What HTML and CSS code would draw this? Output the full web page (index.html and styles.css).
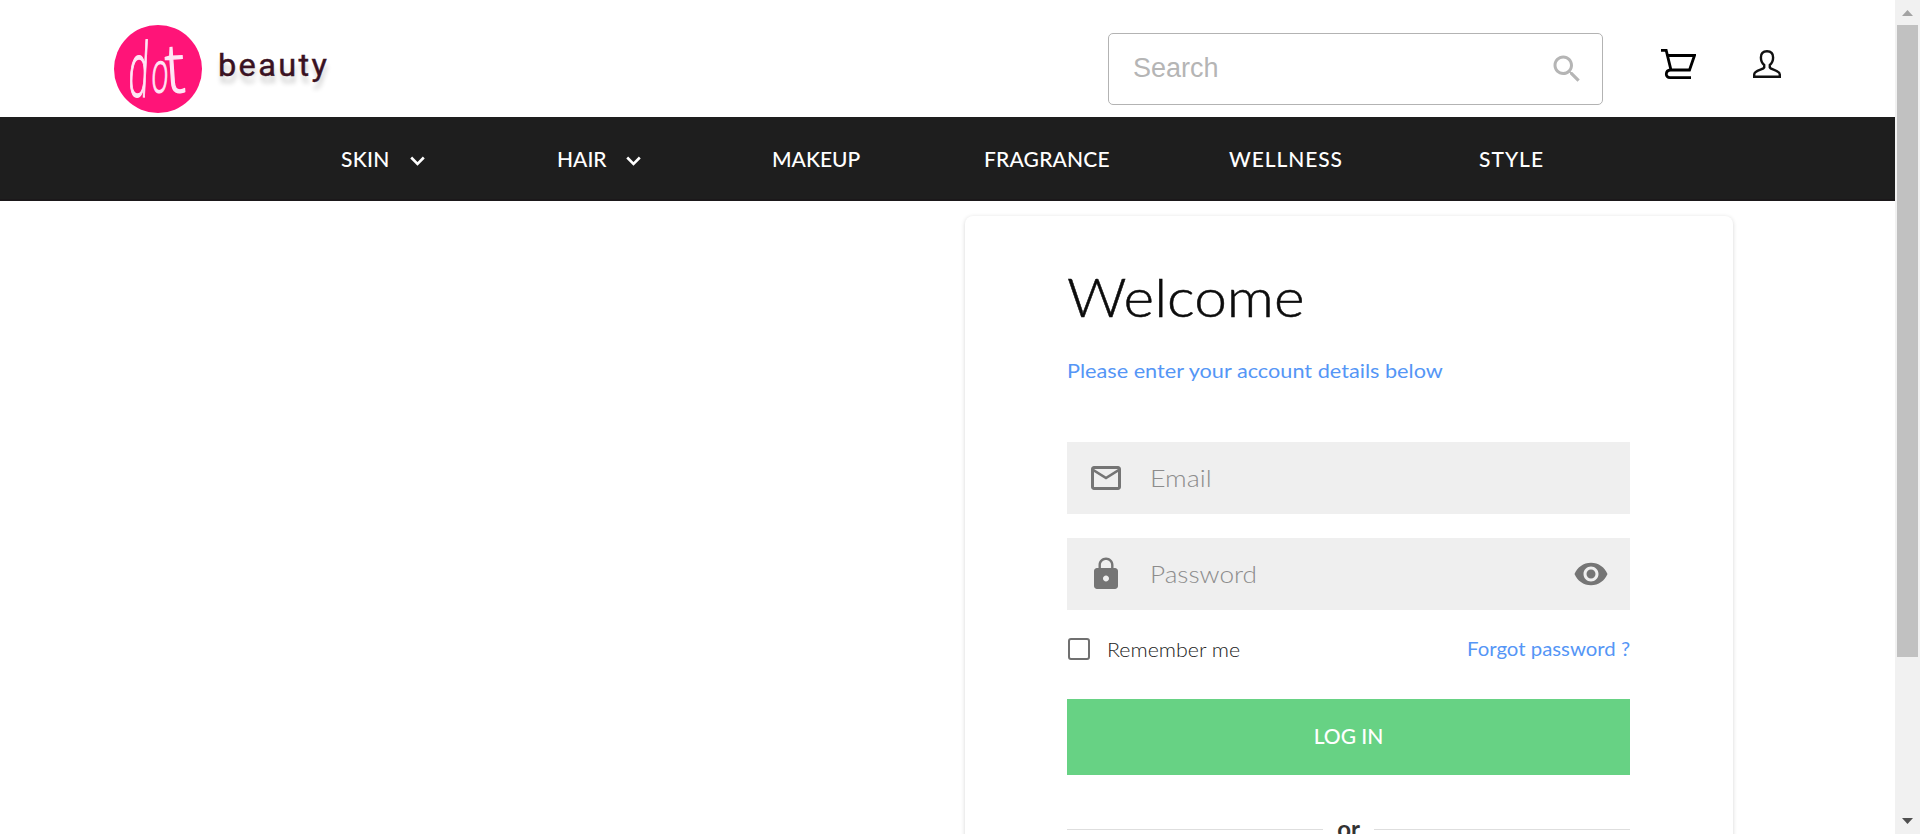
FILE: index.html
```html
<!DOCTYPE html>
<html lang="en">
<head>
<meta charset="utf-8">
<title>dot beauty</title>
<link rel="stylesheet" href="styles.css">
</head>
<body>
<div class="page">
  <header class="header">
    <a class="logo">
      <svg class="logo-mark" viewBox="0 0 88 88">
        <circle cx="44" cy="44" r="44"/>
        <g class="logo-word">
          <text transform="translate(13.500 71) rotate(3) scale(.96 2.150)">d</text>
          <text transform="translate(36.500 67) rotate(3) scale(.84 1.65)">o</text>
          <text transform="translate(53 68) rotate(-4) scale(1.65 1.950)">t</text>
        </g>
      </svg>
      <span class="logo-name">beauty</span>
    </a>
    <div class="search">
      <span class="search-text">Search</span>
      <svg class="icon" viewBox="0 0 24 24"><path d="M15.5 14h-.79l-.28-.27C15.41 12.59 16 11.11 16 9.5 16 5.91 13.09 3 9.5 3S3 5.91 3 9.5 5.91 16 9.5 16c1.61 0 3.09-.59 4.23-1.57l.27.28v.79l5 4.99L20.49 19l-4.99-5zm-6 0C7.01 14 5 11.99 5 9.5S7.01 5 9.5 5 14 7.01 14 9.5 11.99 14 9.5 14z"/></svg>
    </div>
    <svg class="cart" viewBox="0 0 35 30"><path d="M0 1.4H5.2L10 21H28.500L33.500 6.500H6.500M9.500 21C4 21.500 4 28.600 9 28.600H30"/></svg>
    <svg class="user" viewBox="0 0 28 28"><path d="M14 1.200C9.800 1.200 7.900 4 7.900 7.500C7.900 10.500 9 13.200 11.200 15V17.500C10.500 19.600 1.200 20.200 1.200 24.500V26.800H26.800V24.500C26.800 20.200 17.500 19.600 16.800 17.500V15C19 13.200 20.100 10.500 20.100 7.500C20.100 4 18.200 1.200 14 1.200Z"/></svg>
  </header>
  <nav class="nav">
    <a class="skin">SKIN<svg class="chevron" viewBox="0 0 15 10"><path d="M1.200 1.500 7.500 7.900 13.800 1.500"/></svg></a>
    <a class="hair">HAIR<svg class="chevron" viewBox="0 0 15 10"><path d="M1.200 1.500 7.500 7.900 13.800 1.500"/></svg></a>
    <a class="makeup">MAKEUP</a>
    <a class="fragrance">FRAGRANCE</a>
    <a class="wellness">WELLNESS</a>
    <a class="style">STYLE</a>
  </nav>
  <main class="main">
    <section class="card">
      <h1 class="title">Welcome</h1>
      <p class="subtitle">Please enter your account details below</p>
      <div class="field">
        <svg class="icon" viewBox="0 0 24 24"><path d="M20 4H4c-1.100 0-1.990.9-1.990 2L2 18c0 1.100.9 2 2 2h16c1.100 0 2-.9 2-2V6c0-1.100-.9-2-2-2zm0 14H4V8l8 5 8-5v10zm-8-7L4 6h16l-8 5z"/></svg>
        <span class="placeholder email">Email</span>
      </div>
      <div class="field">
        <svg class="icon" viewBox="0 0 24 24"><path d="M18 8h-1V6c0-2.760-2.240-5-5-5S7 3.240 7 6v2H6c-1.100 0-2 .9-2 2v10c0 1.100.9 2 2 2h12c1.100 0 2-.9 2-2V10c0-1.100-.9-2-2-2zm-6 9c-1.100 0-2-.9-2-2s.9-2 2-2 2 .9 2 2-.9 2-2 2zm3.400-9H8.600V6c0-1.870 1.530-3.400 3.400-3.400s3.400 1.530 3.400 3.400v2z"/></svg>
        <span class="placeholder password">Password</span>
        <svg class="icon reveal" viewBox="0 0 24 24"><path d="M12 4.500C7 4.500 2.730 7.610 1 12c1.730 4.390 6 7.500 11 7.500s9.270-3.110 11-7.500c-1.730-4.390-6-7.500-11-7.500zM12 17c-2.760 0-5-2.240-5-5s2.240-5 5-5 5 2.240 5 5-2.240 5-5 5zm0-8c-1.660 0-3 1.340-3 3s1.340 3 3 3 3-1.340 3-3-1.340-3-3-3z"/></svg>
      </div>
      <div class="options">
        <span class="checkbox"></span>
        <span class="remember">Remember me</span>
        <a class="forgot">Forgot password ?</a>
      </div>
      <div class="login"><span class="login-text">LOG IN</span></div>
      <div class="divider"><span>or</span></div>
    </section>
  </main>
</div>
<div class="scrollbar">
  <svg class="arrow" viewBox="0 0 11 6"><path d="M0 6 5.500 0 11 6Z" fill="#a3a3a3"/></svg>
  <div class="thumb"></div>
  <svg class="arrow" viewBox="0 0 11 6"><path d="M0 0H11L5.500 6Z" fill="#505050"/></svg>
</div>
</body>
</html>
```
FILE: styles.css
```css
* { box-sizing: border-box; }
body { margin: 0; height: 834px; overflow: hidden; display: flex; background: #fff; font-family: Lato, sans-serif; }
.page { width: 1895px; height: 834px; overflow: hidden; }
.header { height: 117px; display: flex; align-items: flex-start; padding-left: 114px; }
.logo { width: 994px; display: flex; align-items: flex-start; padding-top: 25px; }
.logo-mark { width: 88px; height: 88px; fill: #ff1478; overflow: visible; }
.logo-word { fill: #ffe6f5; stroke: #ffe6f5; stroke-width: .7; font: 300 35px "Open Sans", sans-serif; }
.logo-name { margin: 23px 0 0 16px; font: 400 31px/36px Roboto, sans-serif; letter-spacing: 2.200px; color: #3a1222; -webkit-text-stroke: .4px #3a1222; text-shadow: 1px 7px 5px rgba(0, 0, 0, .2); transform: scaleX(1.05); transform-origin: left; }
.search { width: 495px; height: 72px; margin-top: 33px; border: 1px solid #b3b3b3; border-radius: 5px; display: flex; align-items: center; justify-content: space-between; padding: 0 17px 0 24px; font: 27px "Liberation Sans", Arial, sans-serif; color: #b5b5b5; }
.search-text { line-height: 30px; margin-top: -2px; }
.icon { width: 36px; height: 36px; fill: #757575; flex: none; }
.search .icon { fill: #b5b5b5; }
.cart { width: 35px; height: 30px; margin: 49px 0 0 58px; fill: none; stroke: #000; stroke-width: 2.8; }
.user { width: 28px; height: 28px; margin: 50px 0 0 57px; fill: none; stroke: #111; stroke-width: 2.4; }
.nav { height: 84px; background: #1e1e1e; border-bottom: 2px solid #1b181a; display: flex; align-items: center; padding: 1px 0 0 341px; font-size: 21px; font-weight: 500; color: #fff; white-space: nowrap; }
.nav a { display: flex; align-items: center; }
.chevron { width: 15px; height: 10px; margin: 4px 0 0 auto; fill: none; stroke: #fff; stroke-width: 2.6; }
.skin { width: 84px; margin-right: 132px; letter-spacing: .3px; }
.hair { width: 84px; margin-right: 131px; }
.makeup { width: 88px; margin-right: 124px; }
.fragrance { width: 125px; margin-right: 120px; letter-spacing: .2px; }
.wellness { width: 114px; margin-right: 136px; letter-spacing: .9px; }
.style { letter-spacing: 1px; }
.main { padding: 15px 0 0 965px; }
.card { width: 768px; height: 680px; padding: 49px 103px 0 102px; border-radius: 8px; background: #fff; box-shadow: 0 1px 4px rgba(0, 0, 0, .17); }
.title, .subtitle, .placeholder, .remember { transform-origin: left; }
.title { margin: 0; font-size: 53px; line-height: 64px; font-weight: 300; color: #0c0c0c; -webkit-text-stroke: .5px #0c0c0c; transform: scaleX(1.105); }
.subtitle { margin: 29px 0 60px; font-size: 20px; line-height: 24px; color: #5596f6; white-space: nowrap; transform: scaleX(1.084); }
.field { height: 72px; margin-bottom: 24px; padding: 0 21px; display: flex; align-items: center; background: #efefef; }
.placeholder { margin: -2px 0 0 26px; font-size: 24px; font-weight: 300; color: #8c8c8c; }
.email { transform: scaleX(1.12); }
.password { transform: scaleX(1.09); }
.reveal { margin-left: auto; }
.options { height: 30px; display: flex; align-items: center; }
.checkbox { width: 22px; height: 22px; margin: 0 17px 0 1px; border: 2.500px solid #707070; border-radius: 3px; }
.remember { font-size: 19px; font-weight: 300; color: #222; transform: scaleX(1.125); }
.forgot { margin: -2px 0 0 auto; font-size: 19px; color: #5596f6; transform: scaleX(1.072); transform-origin: right; }
.login { height: 76px; margin-top: 35px; padding-bottom: 4px; display: flex; align-items: center; justify-content: center; background: #67d284; color: #fff; font-size: 21px; font-weight: 500; }
.divider { display: flex; align-items: center; gap: 14px; height: 30px; margin-top: 39px; font-size: 24px; font-weight: 700; color: #333; }
.divider span { margin-top: -2px; }
.divider::before, .divider::after { content: ""; flex: 1; height: 1px; background: #dedede; }
.scrollbar { width: 25px; height: 834px; padding: 10px 2px 0; background: #f1f1f1; display: flex; flex-direction: column; align-items: center; }
.thumb { width: 21px; height: 632px; margin: 9px 0 161px; background: #c1c1c1; }
.arrow { width: 11px; height: 6px; flex: none; }
```
